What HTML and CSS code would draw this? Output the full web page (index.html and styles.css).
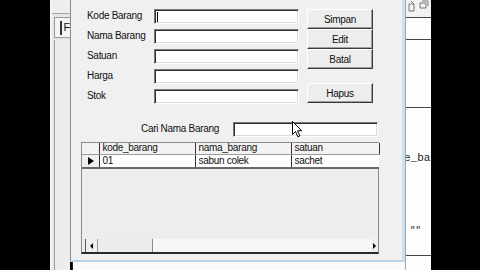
FILE: index.html
```html
<!DOCTYPE html>
<html lang="id">
  <head>
    <meta charset="UTF-8" />
    <meta name="viewport" content="width=device-width, initial-scale=1.0" />
    <title>Data Barang</title>
    <link rel="stylesheet" href="styles.css">
  </head>
  <body>
    <div class="layar">
      <div class="hitam"></div>
      <div class="ide-kiri">
        <div class="ide-atas"></div>
        <div class="ide-tab"><span>F</span></div>
        <div class="ide-sisa"></div>
      </div>
      <div class="tengah">
        <main class="form">
          <div class="entri">
            <div class="isian">
              <div class="baris">
                <label>Kode Barang</label>
                <div class="kotak"><span class="kursor-teks"></span></div>
              </div>
              <div class="baris">
                <label>Nama Barang</label>
                <div class="kotak"></div>
              </div>
              <div class="baris">
                <label>Satuan</label>
                <div class="kotak"></div>
              </div>
              <div class="baris">
                <label>Harga</label>
                <div class="kotak"></div>
              </div>
              <div class="baris">
                <label>Stok</label>
                <div class="kotak"></div>
              </div>
            </div>
            <div class="tombol">
              <button class="btn">Simpan</button>
              <button class="btn">Edit</button>
              <button class="btn">Batal</button>
              <button class="btn" id="hapus">Hapus</button>
            </div>
          </div>

          <div class="cari">
            <label>Cari Nama Barang</label>
            <div class="kotak kotak-cari"></div>
          </div>

          <div class="grid">
            <table>
              <colgroup>
                <col class="c-ind">
                <col class="c-kode">
                <col class="c-nama">
                <col class="c-sat">
              </colgroup>
              <thead>
                <tr>
                  <th></th>
                  <th>kode_barang</th>
                  <th>nama_barang</th>
                  <th>satuan</th>
                </tr>
              </thead>
              <tbody>
                <tr>
                  <td class="ind"><span class="segitiga"></span></td>
                  <td>01</td>
                  <td>sabun colek</td>
                  <td>sachet</td>
                </tr>
              </tbody>
            </table>
            <div class="scroll">
              <span class="panah"><span class="kiri"></span></span>
              <span class="thumb"></span>
              <span class="jalur"></span>
              <span class="panah panah-kanan"><span class="kanan"></span></span>
            </div>
          </div>
        </main>
        <div class="ide-bawah"></div>
      </div>
      <aside class="ide-kanan">
        <div class="alat">
          <svg width="24" height="12" viewBox="0 0 24 12">
            <path d="M2 4h5v7H2zM4 1l3 3" fill="none" stroke="#777" stroke-width="1"/>
            <path d="M13 3h6v5h-6zM15 1h6v5" fill="none" stroke="#777" stroke-width="1"/>
          </svg>
        </div>
        <div class="panel panel-1"></div>
        <div class="panel panel-2"></div>
        <div class="kode">
          <span class="teks-kode">e_ba</span>
          <span class="kutip">""</span>
        </div>
      </aside>
      <div class="hitam hitam-kanan"></div>

      <svg class="mouse" width="11" height="17" viewBox="0 0 11 17">
        <path d="M0.5 0.5 L0.5 13.5 L3.5 10.5 L5.8 15.8 L7.8 15 L5.6 9.8 L9.8 9.8 Z" fill="#fff" stroke="#000" stroke-width="1"/>
      </svg>
    </div>
  </body>
</html>
```

FILE: styles.css
```css
* {
  margin: 0;
  padding: 0;
  box-sizing: border-box;
}

body {
  background-color: #000;
  font-family: "Liberation Sans", Arial, sans-serif;
  font-size: 10px;
  letter-spacing: -0.3px;
  color: #111;
}

.layar {
  position: relative;
  display: flex;
  width: 480px;
  height: 270px;
  overflow: hidden;
}

.hitam {
  width: 50px;
  background-color: #000;
}
.hitam-kanan {
  width: 49px;
}

/* sisi kiri IDE */
.ide-kiri {
  display: flex;
  flex-direction: column;
  width: 20px;
  background-color: #e6e6e6;
  border-left: 2px solid #f4f4f4;
}
.ide-atas {
  height: 14px;
  background-color: #eeeeee;
  border-bottom: 1px solid #a8a8a8;
}
.ide-tab {
  display: flex;
  justify-content: flex-end;
  height: 21px;
  margin-top: 3px;
  margin-left: 2px;
  padding-left: 8px;
  background-color: #f4f4f4;
  border: 1px solid #9a9a9a;
  border-right: none;
}
.ide-tab span {
  flex: 1;
  margin-top: 3px;
  padding-left: 2px;
  border-left: 2px solid #333;
  font-size: 11px;
  line-height: 12px;
  height: 14px;
}
.ide-sisa {
  flex: 1;
  margin-top: 2px;
  margin-left: 2px;
  border-left: 1px solid #a0a0a0;
  background-color: #ececec;
}

/* form */
.tengah {
  display: flex;
  flex-direction: column;
  width: 335px;
}
.form {
  height: 262px;
  padding: 9px 0 0 10px;
  background-color: #f0f0f0;
  border-left: 1px solid #8a8a8a;
  border-right: 3px solid #cde0ee;
  border-bottom: 2px solid #b9d2e6;
}
.ide-bawah {
  flex: 1;
  margin-left: 2px;
  background-color: #fafafa;
  border-left: 1px solid #222;
}

.entri {
  display: flex;
  padding-left: 6px;
}
.baris {
  display: flex;
  align-items: flex-start;
  height: 20px;
}
.baris label,
.cari label {
  width: 67px;
  line-height: 13px;
  white-space: nowrap;
}
.kotak {
  position: relative;
  width: 145px;
  height: 15px;
  background-color: #fff;
  border-top: 1px solid #7a7a7a;
  border-left: 1px solid #7a7a7a;
  border-right: 1px solid #fdfdfd;
  border-bottom: 1px solid #fdfdfd;
  box-shadow: inset 1px 1px 0 #2c2c2c, inset -1px -1px 0 #dcdcdc;
}
.kursor-teks {
  position: absolute;
  left: 2px;
  top: 2px;
  width: 1px;
  height: 10px;
  background-color: #000;
}

.tombol {
  display: flex;
  flex-direction: column;
  margin-left: 8px;
}
.btn {
  width: 66px;
  height: 20px;
  font-family: inherit;
  font-size: 10px;
  letter-spacing: -0.3px;
  color: #111;
  background-color: #ededed;
  border-top: 1px solid #fff;
  border-left: 1px solid #fff;
  border-right: 1px solid #3a3a3a;
  border-bottom: 1px solid #3a3a3a;
  box-shadow: inset -1px -1px 0 #a0a0a0;
}
#hapus {
  margin-top: 14px;
}

.cari {
  display: flex;
  margin-top: 13px;
  padding-left: 60px;
}
.cari label {
  width: 92px;
}

/* grid data */
.grid {
  display: flex;
  flex-direction: column;
  width: 298px;
  height: 112px;
  margin-top: 5px;
  background-color: #ededed;
  border-top: 1px solid #8a8a8a;
  border-left: 1px solid #8a8a8a;
  border-right: 1px solid #8a8a8a;
  border-bottom: 2px solid #2a2a2a;
}
table {
  table-layout: fixed;
  border-collapse: collapse;
  width: 297px;
}
.c-ind { width: 17px; }
.c-kode { width: 96px; }
.c-nama { width: 96px; }
.c-sat { width: 88px; }

th,
td {
  text-align: left;
  font-weight: normal;
  padding-left: 3px;
  white-space: nowrap;
  overflow: hidden;
}
th {
  height: 11px;
  line-height: 10px;
  background-color: #f2f2f2;
  border-right: 1px solid #333;
  border-bottom: 1px solid #9a9a9a;
}
td {
  height: 13px;
  line-height: 12px;
  background-color: #fff;
  border-left: 1px solid #333;
  border-bottom: 2px solid #6a6a6a;
}
td.ind {
  background-color: #efefef;
  border-left: none;
  padding-left: 6px;
}
.segitiga {
  display: block;
  width: 0;
  height: 0;
  border-top: 4px solid transparent;
  border-bottom: 4px solid transparent;
  border-left: 6px solid #000;
}

.scroll {
  display: flex;
  height: 13px;
  margin-top: auto;
  margin-left: 3px;
  background-color: #f6f6f6;
}
.panah {
  display: flex;
  align-items: center;
  justify-content: center;
  width: 13px;
  background-color: #eeeeee;
  border-left: 1px solid #555;
  border-right: 1px solid #9a9a9a;
}
.panah-kanan {
  width: 8px;
  border-left: 1px solid #fff;
  border-right: none;
}
.kiri,
.kanan {
  width: 0;
  height: 0;
  border-top: 3px solid transparent;
  border-bottom: 3px solid transparent;
}
.kiri {
  border-right: 3px solid #000;
}
.kanan {
  border-left: 3px solid #000;
}
.thumb {
  width: 55px;
  background-color: #ececec;
  border-right: 1px solid #8a8a8a;
}
.jalur {
  flex: 1;
}

/* sisi kanan IDE */
.ide-kanan {
  display: flex;
  flex-direction: column;
  width: 26px;
  background-color: #fdfdfd;
  border-left: 1px solid #9aa9b6;
  overflow: hidden;
}
.alat {
  height: 18px;
  background-color: #f2f2f2;
  border-bottom: 1px solid #444;
}
.alat svg {
  display: block;
  margin-left: 1px;
}
.panel-1 {
  height: 22px;
  border-bottom: 1px solid #444;
}
.panel-2 {
  height: 68px;
  border-bottom: 1px solid #444;
}
.kode {
  display: flex;
  flex-direction: column;
  height: 148px;
  padding-top: 44px;
  border-bottom: 1px solid #444;
  font-family: "Liberation Mono", monospace;
  font-size: 11px;
  letter-spacing: 0;
  color: #222;
}
.teks-kode {
  margin-left: -2px;
}
.kutip {
  margin-top: 62px;
  margin-left: 4px;
  font-size: 9px;
}

.mouse {
  position: absolute;
  left: 292px;
  top: 121px;
}
```
